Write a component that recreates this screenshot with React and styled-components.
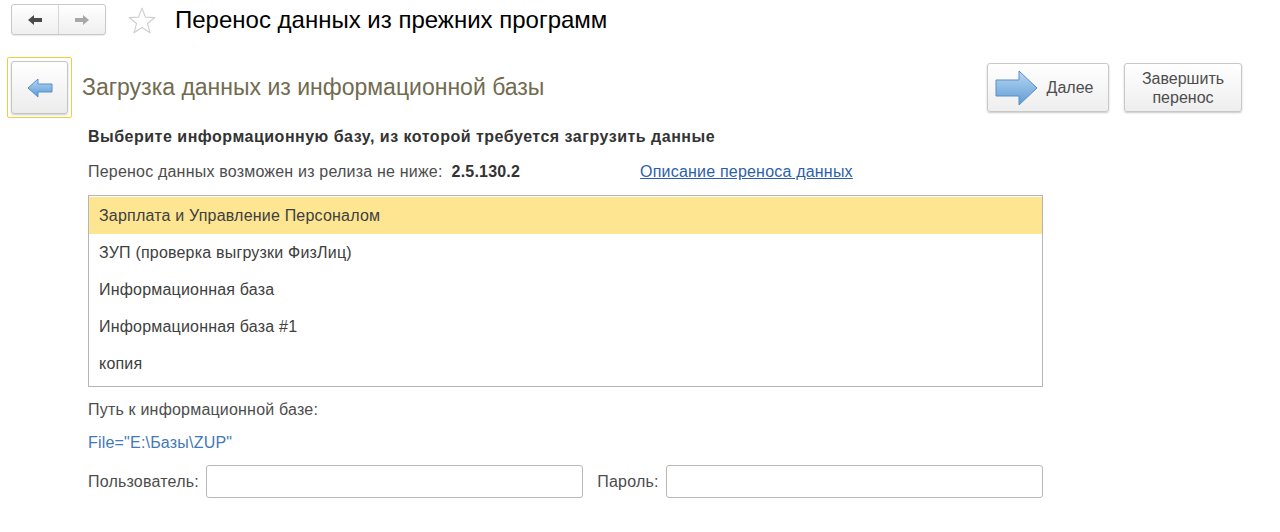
import React from "react";
import styled, { createGlobalStyle } from "styled-components";

const GlobalStyle = createGlobalStyle`
  body {
    margin: 0;
    background: #fff;
    font-family: "Liberation Sans", Arial, sans-serif;
    color: #4d4d4d;
  }
`;

const bases = [
  "Зарплата и Управление Персоналом",
  "ЗУП (проверка выгрузки ФизЛиц)",
  "Информационная база",
  "Информационная база #1",
  "копия",
];

const App = () => {
  return (
    <Page>
      <GlobalStyle />
      <TopBar>
        <NavGroup>
          <NavButton>
            <svg width="16" height="12" viewBox="0 0 16 12">
              <path d="M1 6 L7 1 L7 4 L15 4 L15 8 L7 8 L7 11 Z" fill="#4a4a4a" />
            </svg>
          </NavButton>
          <NavButton $divider>
            <svg width="16" height="12" viewBox="0 0 16 12">
              <path d="M15 6 L9 1 L9 4 L1 4 L1 8 L9 8 L9 11 Z" fill="#a8a8a8" />
            </svg>
          </NavButton>
        </NavGroup>
        <Star width="30" height="30" viewBox="0 0 28 28">
          <path
            d="M14 2 L17.2 10.4 L26 10.8 L19.1 16.4 L21.5 25 L14 20 L6.5 25 L8.9 16.4 L2 10.8 L10.8 10.4 Z"
            fill="none"
            stroke="#cfcfcf"
            strokeWidth="1.1"
            strokeLinejoin="round"
          />
        </Star>
        <Title>Перенос данных из прежних программ</Title>
      </TopBar>

      <HeaderRow>
        <HeaderLeft>
          <FocusFrame>
            <IconButton>
              <svg width="28" height="22" viewBox="0 0 28 22">
                <defs>
                  <linearGradient id="backG" x1="0" y1="0" x2="0" y2="1">
                    <stop offset="0" stopColor="#b5d6f2" />
                    <stop offset="1" stopColor="#5a9ad6" />
                  </linearGradient>
                </defs>
                <path
                  d="M2 11 L12 2 L12 7 L26 7 L26 15 L12 15 L12 20 Z"
                  fill="url(#backG)"
                  stroke="#5b8fc4"
                  strokeWidth="1"
                  strokeLinejoin="round"
                />
              </svg>
            </IconButton>
          </FocusFrame>
          <Heading>Загрузка данных из информационной базы</Heading>
        </HeaderLeft>
        <HeaderRight>
          <CommandButton $width={122}>
            <svg width="44" height="38" viewBox="0 0 44 38">
              <defs>
                <linearGradient id="nextG" x1="0" y1="0" x2="0" y2="1">
                  <stop offset="0" stopColor="#b9d8f3" />
                  <stop offset="1" stopColor="#5d9bd6" />
                </linearGradient>
              </defs>
              <path
                d="M1 11 L24 11 L24 2 L42 19 L24 36 L24 27 L1 27 Z"
                fill="url(#nextG)"
                stroke="#5b8fc4"
                strokeWidth="1"
                strokeLinejoin="round"
              />
            </svg>
            <span>Далее</span>
          </CommandButton>
          <CommandButton $width={118} $center>
            Завершить
            <br />
            перенос
          </CommandButton>
        </HeaderRight>
      </HeaderRow>

      <Content>
        <BoldLabel>
          Выберите информационную базу, из которой требуется загрузить данные
        </BoldLabel>
        <ReleaseRow>
          <span>Перенос данных возможен из релиза не ниже:</span>
          <ReleaseValue>2.5.130.2</ReleaseValue>
          <DocLink href="#">Описание переноса данных</DocLink>
        </ReleaseRow>
        <List>
          {bases.map((name, i) => (
            <ListRow key={name} $selected={i === 0}>
              {name}
            </ListRow>
          ))}
        </List>
        <PathLabel>Путь к информационной базе:</PathLabel>
        <PathValue>File="E:\Базы\ZUP"</PathValue>
        <CredRow>
          <FieldLabel>Пользователь:</FieldLabel>
          <TextInput />
          <FieldLabel $gap>Пароль:</FieldLabel>
          <TextInput type="password" />
        </CredRow>
      </Content>
    </Page>
  );
};

export default App;

const Page = styled.div`
  width: 1280px;
  height: 532px;
  overflow: hidden;
`;

const TopBar = styled.div`
  display: flex;
  align-items: center;
  height: 40px;
  padding-left: 11px;
`;

const NavGroup = styled.div`
  display: flex;
  height: 29px;
  margin-top: -1px;
  border: 1px solid #c8c8c8;
  border-radius: 3px;
  background: linear-gradient(#ffffff, #efefef);
  box-shadow: 0 1px 1px rgba(0, 0, 0, 0.08);
`;

const NavButton = styled.div`
  width: 46px;
  display: flex;
  align-items: center;
  justify-content: center;
  border-left: ${(p) => (p.$divider ? "1px solid #d6d6d6" : "none")};
`;

const Star = styled.svg`
  margin-left: 21px;
  margin-top: 2px;
`;

const Title = styled.h1`
  margin: 0 0 0 18px;
  font-size: 24px;
  font-weight: normal;
  color: #000;
`;

const HeaderRow = styled.div`
  display: flex;
  justify-content: space-between;
  align-items: center;
  margin-top: 17px;
  padding: 0 38px 0 7px;
`;

const HeaderLeft = styled.div`
  display: flex;
  align-items: center;
`;

const FocusFrame = styled.div`
  padding: 3px;
  border: 1px solid #f0cf3c;
  border-radius: 2px;
`;

const IconButton = styled.div`
  width: 55px;
  height: 51px;
  display: flex;
  align-items: center;
  justify-content: center;
  border: 1px solid #c4c4c4;
  border-radius: 3px;
  background: linear-gradient(#ffffff, #ececec);
  box-shadow: 0 1px 2px rgba(0, 0, 0, 0.2);
`;

const Heading = styled.h2`
  margin: 0 0 0 10px;
  font-size: 23px;
  font-weight: normal;
  color: #716b4f;
`;

const HeaderRight = styled.div`
  display: flex;
  gap: 15px;
`;

const CommandButton = styled.div`
  width: ${(p) => p.$width}px;
  height: 49px;
  box-sizing: border-box;
  display: flex;
  align-items: center;
  justify-content: center;
  gap: 8px;
  padding-right: ${(p) => (p.$center ? 0 : 8)}px;
  text-align: center;
  font-size: 16px;
  line-height: 19px;
  color: #4d4d4d;
  border: 1px solid #c8c8c8;
  border-radius: 3px;
  background: linear-gradient(#ffffff, #eeeeee);
  box-shadow: 0 1px 2px rgba(0, 0, 0, 0.22);
`;

const Content = styled.div`
  padding-left: 88px;
  width: 955px;
  font-size: 16px;
  letter-spacing: 0.2px;
`;

const BoldLabel = styled.div`
  margin-top: 9px;
  font-weight: bold;
  color: #333;
  line-height: 19px;
  letter-spacing: 0.5px;
`;

const ReleaseRow = styled.div`
  display: flex;
  align-items: baseline;
  margin-top: 16px;
  line-height: 19px;
`;

const ReleaseValue = styled.span`
  margin-left: 9px;
  font-weight: bold;
  color: #333;
`;

const DocLink = styled.a`
  margin-left: 120px;
  color: #2d5fa8;
  text-decoration: underline;
`;

const List = styled.div`
  margin-top: 14px;
  border: 1px solid #b5b5b5;
  padding: 1px 0 4px;
`;

const ListRow = styled.div`
  height: 37px;
  display: flex;
  align-items: center;
  padding-left: 10px;
  color: #404040;
  background: ${(p) => (p.$selected ? "#fde591" : "transparent")};
`;

const PathLabel = styled.div`
  margin-top: 13px;
  line-height: 19px;
`;

const PathValue = styled.div`
  margin-top: 14px;
  line-height: 19px;
  color: #4279b8;
`;

const CredRow = styled.div`
  display: flex;
  align-items: center;
  margin-top: 13px;
`;

const FieldLabel = styled.span`
  margin-left: ${(p) => (p.$gap ? 14 : 0)}px;
  margin-right: 7px;
  color: #4d4d4d;
`;

const TextInput = styled.input`
  flex: 1;
  height: 33px;
  box-sizing: border-box;
  border: 1px solid #b8b8b8;
  border-radius: 3px;
  outline: none;
`;
